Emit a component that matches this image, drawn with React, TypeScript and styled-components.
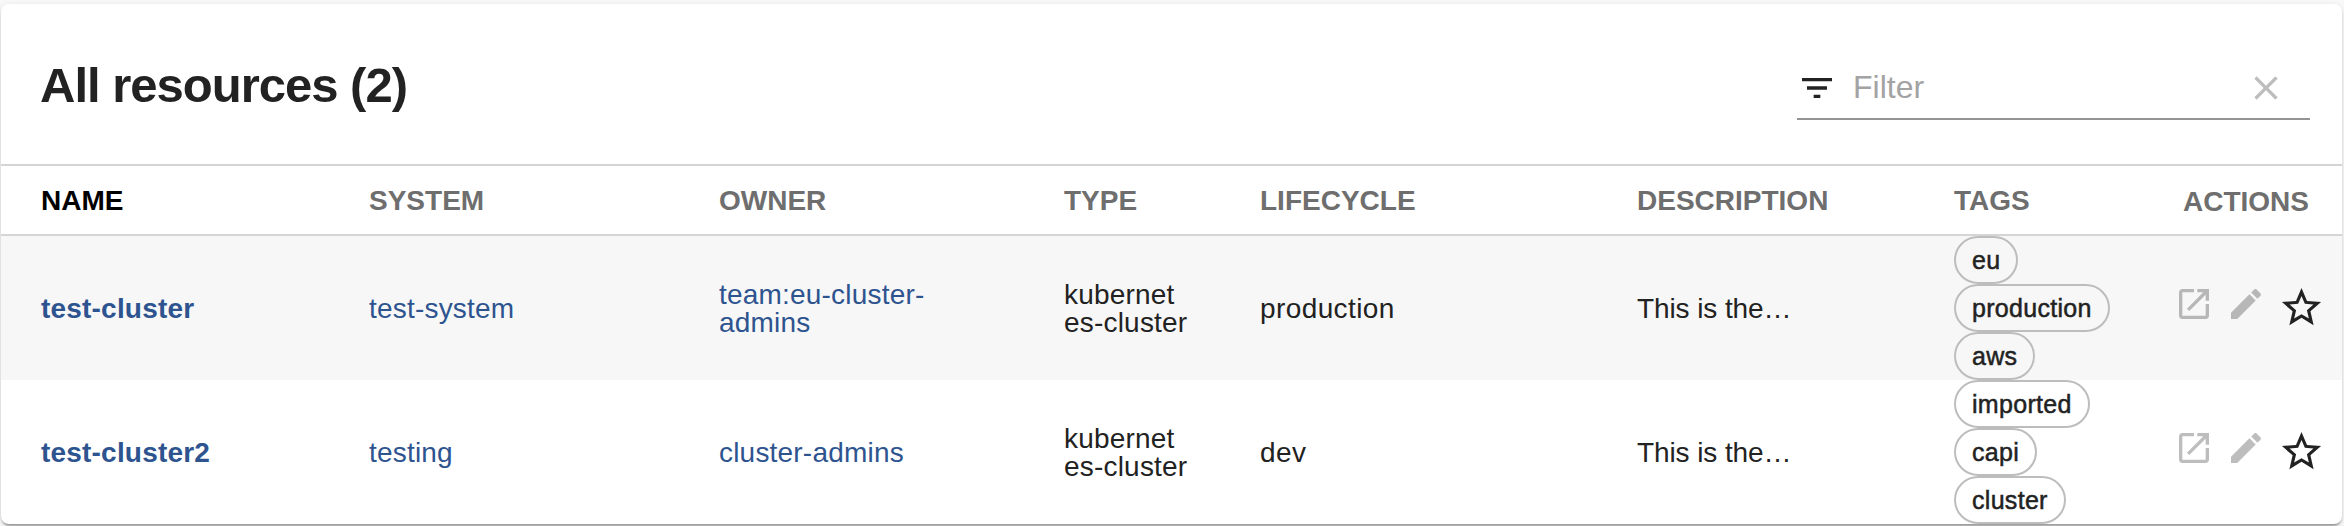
import React from "react";
import styled, { createGlobalStyle } from "styled-components";

const GlobalStyle = createGlobalStyle`
  * { box-sizing: border-box; }
  body {
    margin: 0;
    background: #f8f8f8;
    color: #222;
    font-family: "Liberation Sans", Arial, sans-serif;
    font-size: 28px;
    line-height: 28px;
  }
`;

const Page = styled.main`
  height: 526px;
  padding: 4px 2px 2px 1px;
  overflow: hidden;
`;

const Card = styled.section`
  height: 520px;
  background: #fff;
  border-radius: 8px;
  box-shadow:
    0 4px 2px -2px rgba(0, 0, 0, 0.2),
    0 2px 2px 0 rgba(0, 0, 0, 0.14),
    0 2px 6px 0 rgba(0, 0, 0, 0.12);
`;

const Toolbar = styled.header`
  display: flex;
  align-items: flex-start;
  justify-content: space-between;
  height: 160px;
  padding: 48px 32px 0 40px;
`;

const Title = styled.h2`
  margin: 5px 0 0 -1px;
  font-size: 49px;
  font-weight: 700;
  line-height: 56px;
  letter-spacing: -1px;
`;

const FilterField = styled.label`
  display: flex;
  align-items: center;
  width: 513px;
  height: 68px;
  padding: 5px 24px 0 0;
  border-bottom: 2px solid #949494;
`;

const FilterInput = styled.input`
  flex: 1;
  min-width: 0;
  height: 40px;
  margin: 0 0 0 16px;
  padding: 0;
  border: 0;
  outline: 0;
  background: transparent;
  color: #222;
  font: 32px "Liberation Sans", Arial, sans-serif;
  &::placeholder { color: #a3a3a3; opacity: 1; }
`;

const Icon = styled.svg<{ $size?: number; $muted?: boolean }>`
  display: block;
  flex: none;
  width: ${(p) => p.$size ?? 40}px;
  height: ${(p) => p.$size ?? 40}px;
  fill: ${(p) => (p.$muted ? "rgba(0, 0, 0, 0.26)" : "#222")};
`;

const Row = styled.div<{ $shaded?: boolean }>`
  display: grid;
  grid-template-columns: 328px 350px 345px 196px 377px 317px 220px 1fr;
  align-items: center;
  height: 144px;
  padding-left: 40px;
  background: ${(p) => (p.$shaded ? "#f7f7f7" : "transparent")};
`;

const HeadRow = styled(Row)`
  height: 72px;
  border-top: 2px solid #d5d5d5;
  border-bottom: 2px solid #d5d5d5;
  color: #6e6e6e;
  font-weight: 700;
`;

const HeadCell = styled.div<{ $active?: boolean; $last?: boolean }>`
  color: ${(p) => (p.$active ? "#000" : "inherit")};
  padding: ${(p) => (p.$last ? "4px 0 0 9px" : "2px 0 0")};
`;

const Cell = styled.div<{ $width?: number; $spacing?: number }>`
  width: ${(p) => (p.$width ? `${p.$width}px` : "auto")};
  padding-top: 2px;
  overflow-wrap: anywhere;
  letter-spacing: ${(p) => p.$spacing ?? 0.2}px;
`;

const Link = styled.a<{ $strong?: boolean }>`
  color: #2e5490;
  font-weight: ${(p) => (p.$strong ? 700 : 400)};
  text-decoration: none;
`;

const Tags = styled.div`
  display: flex;
  flex-direction: column;
  align-items: flex-start;
`;

const Chip = styled.span`
  height: 48px;
  padding: 0 16px;
  border: 2px solid #bdbdbd;
  border-radius: 24px;
  font-size: 25px;
  line-height: 45px;
  letter-spacing: 0.3px;
  -webkit-text-stroke: 0.5px #222;
`;

const Actions = styled.div`
  display: flex;
  align-items: flex-start;
  gap: 12px;
  padding-bottom: 1px;
`;

const paths = {
  filter: "M10 18h4v-2h-4v2zM3 6v2h18V6H3zm3 7h12v-2H6v2z",
  clear:
    "M19 6.41L17.59 5 12 10.59 6.41 5 5 6.41 10.59 12 5 17.59 6.41 19 12 13.41 17.59 19 19 17.59 13.41 12z",
  open:
    "M19 19H5V5h7V3H5c-1.11 0-2 .9-2 2v14c0 1.1.89 2 2 2h14c1.1 0 2-.9 2-2v-7h-2v7zM14 3v2h3.59l-9.83 9.83 1.41 1.41L19 6.41V10h2V3h-7z",
  edit:
    "M3 17.25V21h3.75L17.81 9.94l-3.75-3.75L3 17.25zM20.71 7.04c.39-.39.39-1.02 0-1.41l-2.34-2.34c-.39-.39-1.02-.39-1.41 0l-1.83 1.83 3.75 3.75 1.83-1.83z",
  star:
    "M22 9.24l-7.19-.62L12 2 9.19 8.63 2 9.24l5.46 4.73L5.82 21 12 17.27 18.18 21l-1.63-7.03L22 9.24zM12 15.4l-3.76 2.27 1-4.28-3.32-2.88 4.38-.38L12 6.1l1.71 4.04 4.38.38-3.32 2.88 1 4.28L12 15.4z",
};

function Glyph({ name, size, muted }: { name: keyof typeof paths; size?: number; muted?: boolean }) {
  return (
    <Icon viewBox="0 0 24 24" $size={size} $muted={muted} aria-hidden="true">
      <path d={paths[name]} />
    </Icon>
  );
}

const columns = ["NAME", "SYSTEM", "OWNER", "TYPE", "LIFECYCLE", "DESCRIPTION", "TAGS", "ACTIONS"];

const resources = [
  {
    name: "test-cluster",
    system: "test-system",
    owner: "team:eu-cluster-admins",
    type: "kubernetes-cluster",
    lifecycle: "production",
    description: "This is the…",
    tags: ["eu", "production", "aws"],
  },
  {
    name: "test-cluster2",
    system: "testing",
    owner: "cluster-admins",
    type: "kubernetes-cluster",
    lifecycle: "dev",
    description: "This is the…",
    tags: ["imported", "capi", "cluster"],
  },
];

export default function App() {
  return (
    <>
      <GlobalStyle />
      <Page>
        <Card>
          <Toolbar>
            <Title>All resources ({resources.length})</Title>
            <FilterField>
              <Glyph name="filter" />
              <FilterInput placeholder="Filter" />
              <Glyph name="clear" muted />
            </FilterField>
          </Toolbar>
          <HeadRow>
            {columns.map((c, i) => (
              <HeadCell key={c} $active={i === 0} $last={i === columns.length - 1}>
                {c}
              </HeadCell>
            ))}
          </HeadRow>
          {resources.map((r, i) => (
            <Row key={r.name} $shaded={i % 2 === 0}>
              <Cell><Link $strong>{r.name}</Link></Cell>
              <Cell><Link>{r.system}</Link></Cell>
              <Cell $width={220}><Link>{r.owner}</Link></Cell>
              <Cell $width={124}>
                {r.type.slice(0, 8)}
                <wbr />
                {r.type.slice(8)}
              </Cell>
              <Cell $spacing={0.4}>{r.lifecycle}</Cell>
              <Cell $spacing={-0.1}>{r.description}</Cell>
              <Tags>
                {r.tags.map((t) => (
                  <Chip key={t}>{t}</Chip>
                ))}
              </Tags>
              <Actions>
                <Glyph name="open" muted />
                <Glyph name="edit" muted />
                <Glyph name="star" size={47} />
              </Actions>
            </Row>
          ))}
        </Card>
      </Page>
    </>
  );
}
